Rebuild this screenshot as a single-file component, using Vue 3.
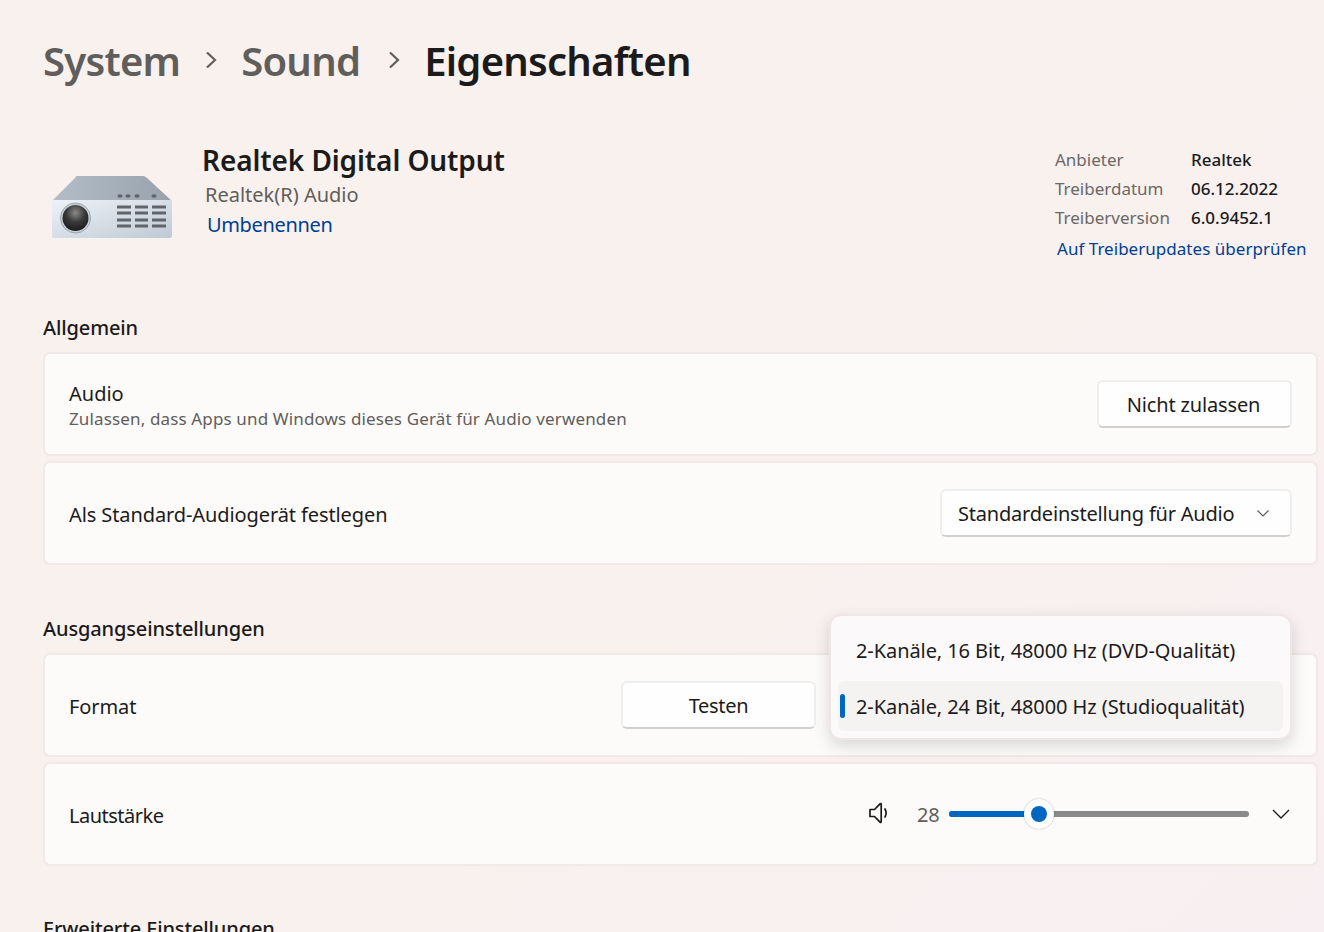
<script setup>
const driver = [
  { label: 'Anbieter', value: 'Realtek' },
  { label: 'Treiberdatum', value: '06.12.2022' },
  { label: 'Treiberversion', value: '6.0.9452.1' },
]
const volume = 28
</script>

<template>
  <div class="page">
    <nav class="crumbs">
      <span class="crumb">System</span>
      <svg class="sep" viewBox="0 0 12 18" width="12" height="18"><path d="M2 1.500l8 7.500-8 7.500" fill="none" stroke="#605e5b" stroke-width="2.200"/></svg>
      <span class="crumb">Sound</span>
      <svg class="sep second-sep" viewBox="0 0 12 18" width="12" height="18"><path d="M2 1.500l8 7.500-8 7.500" fill="none" stroke="#605e5b" stroke-width="2.200"/></svg>
      <span class="crumb current">Eigenschaften</span>
    </nav>

    <header class="device">
      <svg class="device-icon" viewBox="0 0 122 63" width="122" height="63">
        <defs>
          <linearGradient id="top" x1="0" y1="0" x2="1" y2="0">
            <stop offset="0" stop-color="#b3bdc7"/>
            <stop offset="1" stop-color="#98a2ad"/>
          </linearGradient>
          <linearGradient id="front" x1="0" y1="0" x2="1" y2="1">
            <stop offset="0" stop-color="#eef2f7"/>
            <stop offset="1" stop-color="#bfc9d4"/>
          </linearGradient>
          <radialGradient id="lens" cx="0.5" cy="0.3" r="0.65">
            <stop offset="0" stop-color="#8a8a8a"/>
            <stop offset="0.55" stop-color="#3a3a3a"/>
            <stop offset="1" stop-color="#202020"/>
          </radialGradient>
        </defs>
        <path d="M27 0h66q2 0 4 2l25 23H2L25 2q1-2 2-2z" fill="url(#top)"/>
        <path d="M2 24h120v36q0 2-2 2H4q-2 0-2-2z" fill="url(#front)"/>
        <circle cx="25.500" cy="42" r="15" fill="#c8d2dc" stroke="#9aa5b0"/>
        <circle cx="25.500" cy="42" r="13" fill="url(#lens)"/>
        <g fill="#5f656b">
          <ellipse cx="70" cy="20" rx="2.600" ry="1.800"/><ellipse cx="78" cy="20" rx="2.600" ry="1.800"/><ellipse cx="87" cy="20" rx="2.600" ry="1.800"/><ellipse cx="104" cy="20" rx="2.600" ry="1.800"/>
          <rect x="67" y="29.500" width="14" height="3"/><rect x="85" y="29.500" width="13" height="3"/><rect x="102" y="29.500" width="14" height="3"/>
          <rect x="67" y="35.500" width="14" height="3"/><rect x="85" y="35.500" width="13" height="3"/><rect x="102" y="35.500" width="14" height="3"/>
          <rect x="67" y="42.500" width="14" height="3"/><rect x="85" y="42.500" width="13" height="3"/><rect x="102" y="42.500" width="14" height="3"/>
          <rect x="67" y="48.500" width="14" height="3"/><rect x="85" y="48.500" width="13" height="3"/><rect x="102" y="48.500" width="14" height="3"/>
        </g>
      </svg>
      <div class="device-text">
        <h1>Realtek Digital Output</h1>
        <div class="vendor">Realtek(R) Audio</div>
        <a class="link rename">Umbenennen</a>
      </div>
      <div class="driver">
        <div v-for="d in driver" :key="d.label" class="driver-row">
          <span class="driver-label">{{ d.label }}</span>
          <span class="driver-value">{{ d.value }}</span>
        </div>
        <a class="link update">Auf Treiberupdates überprüfen</a>
      </div>
    </header>

    <h2 class="section first">Allgemein</h2>
    <section class="card">
      <div class="card-text">
        <div class="title">Audio</div>
        <div class="sub">Zulassen, dass Apps und Windows dieses Gerät für Audio verwenden</div>
      </div>
      <button class="btn allow">Nicht zulassen</button>
    </section>
    <section class="card">
      <div class="title">Als Standard-Audiogerät festlegen</div>
      <button class="btn combo">
        <span>Standardeinstellung für Audio</span>
        <svg viewBox="0 0 12 7" width="12" height="7"><path d="M.5.500l5.500 5.500L11.500.500" fill="none" stroke="#5d5b59" stroke-width="1.100"/></svg>
      </button>
    </section>

    <h2 class="section second">Ausgangseinstellungen</h2>
    <section class="card format">
      <div class="title">Format</div>
      <button class="btn test">Testen</button>
      <div class="menu">
        <div class="option">2-Kanäle, 16 Bit, 48000 Hz (DVD-Qualität)</div>
        <div class="option selected">2-Kanäle, 24 Bit, 48000 Hz (Studioqualität)</div>
      </div>
    </section>
    <section class="card">
      <div class="title narrow">Lautstärke</div>
      <div class="volume">
        <svg class="speaker" viewBox="0 0 19 22" width="19" height="22">
          <path d="M1 7.500h4.500L11 1.800q1.200-.8 1.200.6v17.200q0 1.400-1.200.6L5.500 14.500H1z" fill="none" stroke="#1b1b1b" stroke-width="1.700" stroke-linejoin="round"/>
          <path d="M16 7q2.200 4 0 8" fill="none" stroke="#1b1b1b" stroke-width="1.700" stroke-linecap="round"/>
        </svg>
        <span class="vol-num">{{ volume }}</span>
        <div class="slider">
          <div class="fill"></div>
          <div class="thumb"><span></span></div>
        </div>
        <svg class="vol-chev" viewBox="0 0 18 10" width="18" height="10"><path d="M1 1l8 8 8-8" fill="none" stroke="#1b1b1b" stroke-width="1.300"/></svg>
      </div>
    </section>

    <h2 class="section third">Erweiterte Einstellungen</h2>
  </div>
</template>

<style>
html, body { margin: 0; height: 100%; overflow: hidden; }
</style>

<style scoped>
.page {
  box-sizing: border-box;
  width: 1324px;
  height: 932px;
  overflow: hidden;
  padding: 0 6px 0 43px;
  background: linear-gradient(135deg, #f9f1ee 0%, #f9f1ee 55%, #f8eff2 100%);
  font-family: "Noto Sans", "Open Sans", sans-serif;
  color: #1b1b1b;
}
.crumbs {
  display: flex;
  align-items: center;
  height: 62px;
  padding-top: 30px;
}
.crumb {
  font-size: 40px;
  font-weight: 600;
  line-height: 62px;
  color: #605e5b;
  letter-spacing: -0.75px;
}
.crumb.current { color: #1b1b1b; }
.sep { margin: 0 24px 2px 25px; }
.second-sep { margin: 0 24px 2px 28px; }
.device {
  display: flex;
  align-items: flex-start;
  margin-top: 49px;
  height: 173px;
}
.device-icon { margin: 35px 0 0 7px; flex: none; }
.device-text { margin-left: 31px; flex: 1; }
h1 {
  margin: 0 0 0 -1px;
  font-size: 28px;
  font-weight: 600;
  line-height: 38px;
  letter-spacing: -0.1px;
  white-space: nowrap;
}
.vendor {
  margin: 2px 0 0 2px;
  font-size: 20px;
  line-height: 28px;
  color: #605e5b;
}
.link { color: #003e92; display: block; }
.rename { font-size: 20px; line-height: 28px; margin: 2px 0 0 4px; letter-spacing: -0.35px; }
.driver { width: 263px; flex: none; padding-top: 4px; }
.driver-row {
  display: flex;
  font-size: 17px;
  line-height: 29px;
}
.driver-label { width: 136px; color: #6a6866; }
.driver-value { font-weight: 500; color: #1b1b1b; }
.update { font-size: 17px; line-height: 24px; margin: 5px 0 0 2px; white-space: nowrap; letter-spacing: 0.03px; }
.section {
  margin: 0;
  font-size: 20px;
  font-weight: 500;
  line-height: 28px;
  letter-spacing: -0.13px;
  color: #1b1b1b;
}
.section.first { margin-bottom: 10px; }
.section.second { margin-top: 50px; margin-bottom: 10px; }
.section.third { margin-top: 49px; }
.card {
  box-sizing: border-box;
  position: relative;
  display: flex;
  align-items: center;
  justify-content: space-between;
  height: 104px;
  margin-bottom: 5px;
  padding: 0 24px;
  background: #fdfafa;
  border: 2px solid #f1e9e8;
  border-radius: 7px;
}
.title { font-size: 20px; line-height: 26px; letter-spacing: -0.1px; }
.narrow { letter-spacing: -0.5px; }
.card > .title, .card-text { margin-top: 4px; }
.card-text .title { letter-spacing: 0; }
.sub { font-size: 17px; line-height: 24px; color: #605e5b; letter-spacing: 0.14px; }
.btn {
  box-sizing: border-box;
  height: 48px;
  background: #fefefe;
  border: 2px solid #f0eeed;
  border-bottom-color: #d2d0cf;
  border-radius: 6px;
  font: inherit;
  font-size: 20px;
  letter-spacing: -0.15px;
  color: #1b1b1b;
  padding: 0;
}
.allow { width: 195px; padding-right: 2px; }
.combo {
  width: 352px;
  display: flex;
  align-items: center;
  justify-content: space-between;
  padding: 0 21px 0 16px;
  letter-spacing: -0.2px;
}
.test { width: 195px; margin-left: auto; margin-right: 476px; letter-spacing: -0.3px; }
.menu {
  box-sizing: border-box;
  position: absolute;
  left: 784px;
  top: -41px;
  width: 463px;
  height: 126px;
  padding: 10px 7px 8px;
  background: #fcf9fa;
  border: 2px solid #efe6e7;
  border-radius: 12px;
  box-shadow: 0 6px 16px rgba(0, 0, 0, 0.14);
}
.option {
  position: relative;
  height: 50px;
  line-height: 50px;
  margin-bottom: 5px;
  padding-left: 18px;
  font-size: 20px;
  letter-spacing: -0.08px;
  border-radius: 6px;
  white-space: nowrap;
}
.option.selected { background: #f5f2f2; margin-bottom: 0; line-height: 52px; }
.option.selected::before {
  content: "";
  position: absolute;
  left: 2px;
  top: 13px;
  width: 5px;
  height: 24px;
  border-radius: 3px;
  background: #0067c0;
}
.volume { display: flex; align-items: center; }
.speaker { margin-right: 29px; margin-top: -2px; }
.vol-num { font-size: 20px; color: #605e5b; width: 32px; letter-spacing: -0.2px; }
.slider {
  position: relative;
  width: 300px;
  height: 6px;
  border-radius: 3px;
  background: #8a8a8a;
  margin-right: 23px;
}
.fill {
  height: 6px;
  width: 90px;
  border-radius: 3px;
  background: #0067c0;
}
.thumb {
  position: absolute;
  left: 75px;
  top: -12px;
  width: 30px;
  height: 30px;
  border-radius: 50%;
  background: #fff;
  box-shadow: 0 0 2px rgba(0, 0, 0, 0.3);
  display: flex;
  align-items: center;
  justify-content: center;
}
.thumb span {
  width: 16px;
  height: 16px;
  border-radius: 50%;
  background: #0067c0;
}
.vol-chev { margin-right: 2px; }
</style>
